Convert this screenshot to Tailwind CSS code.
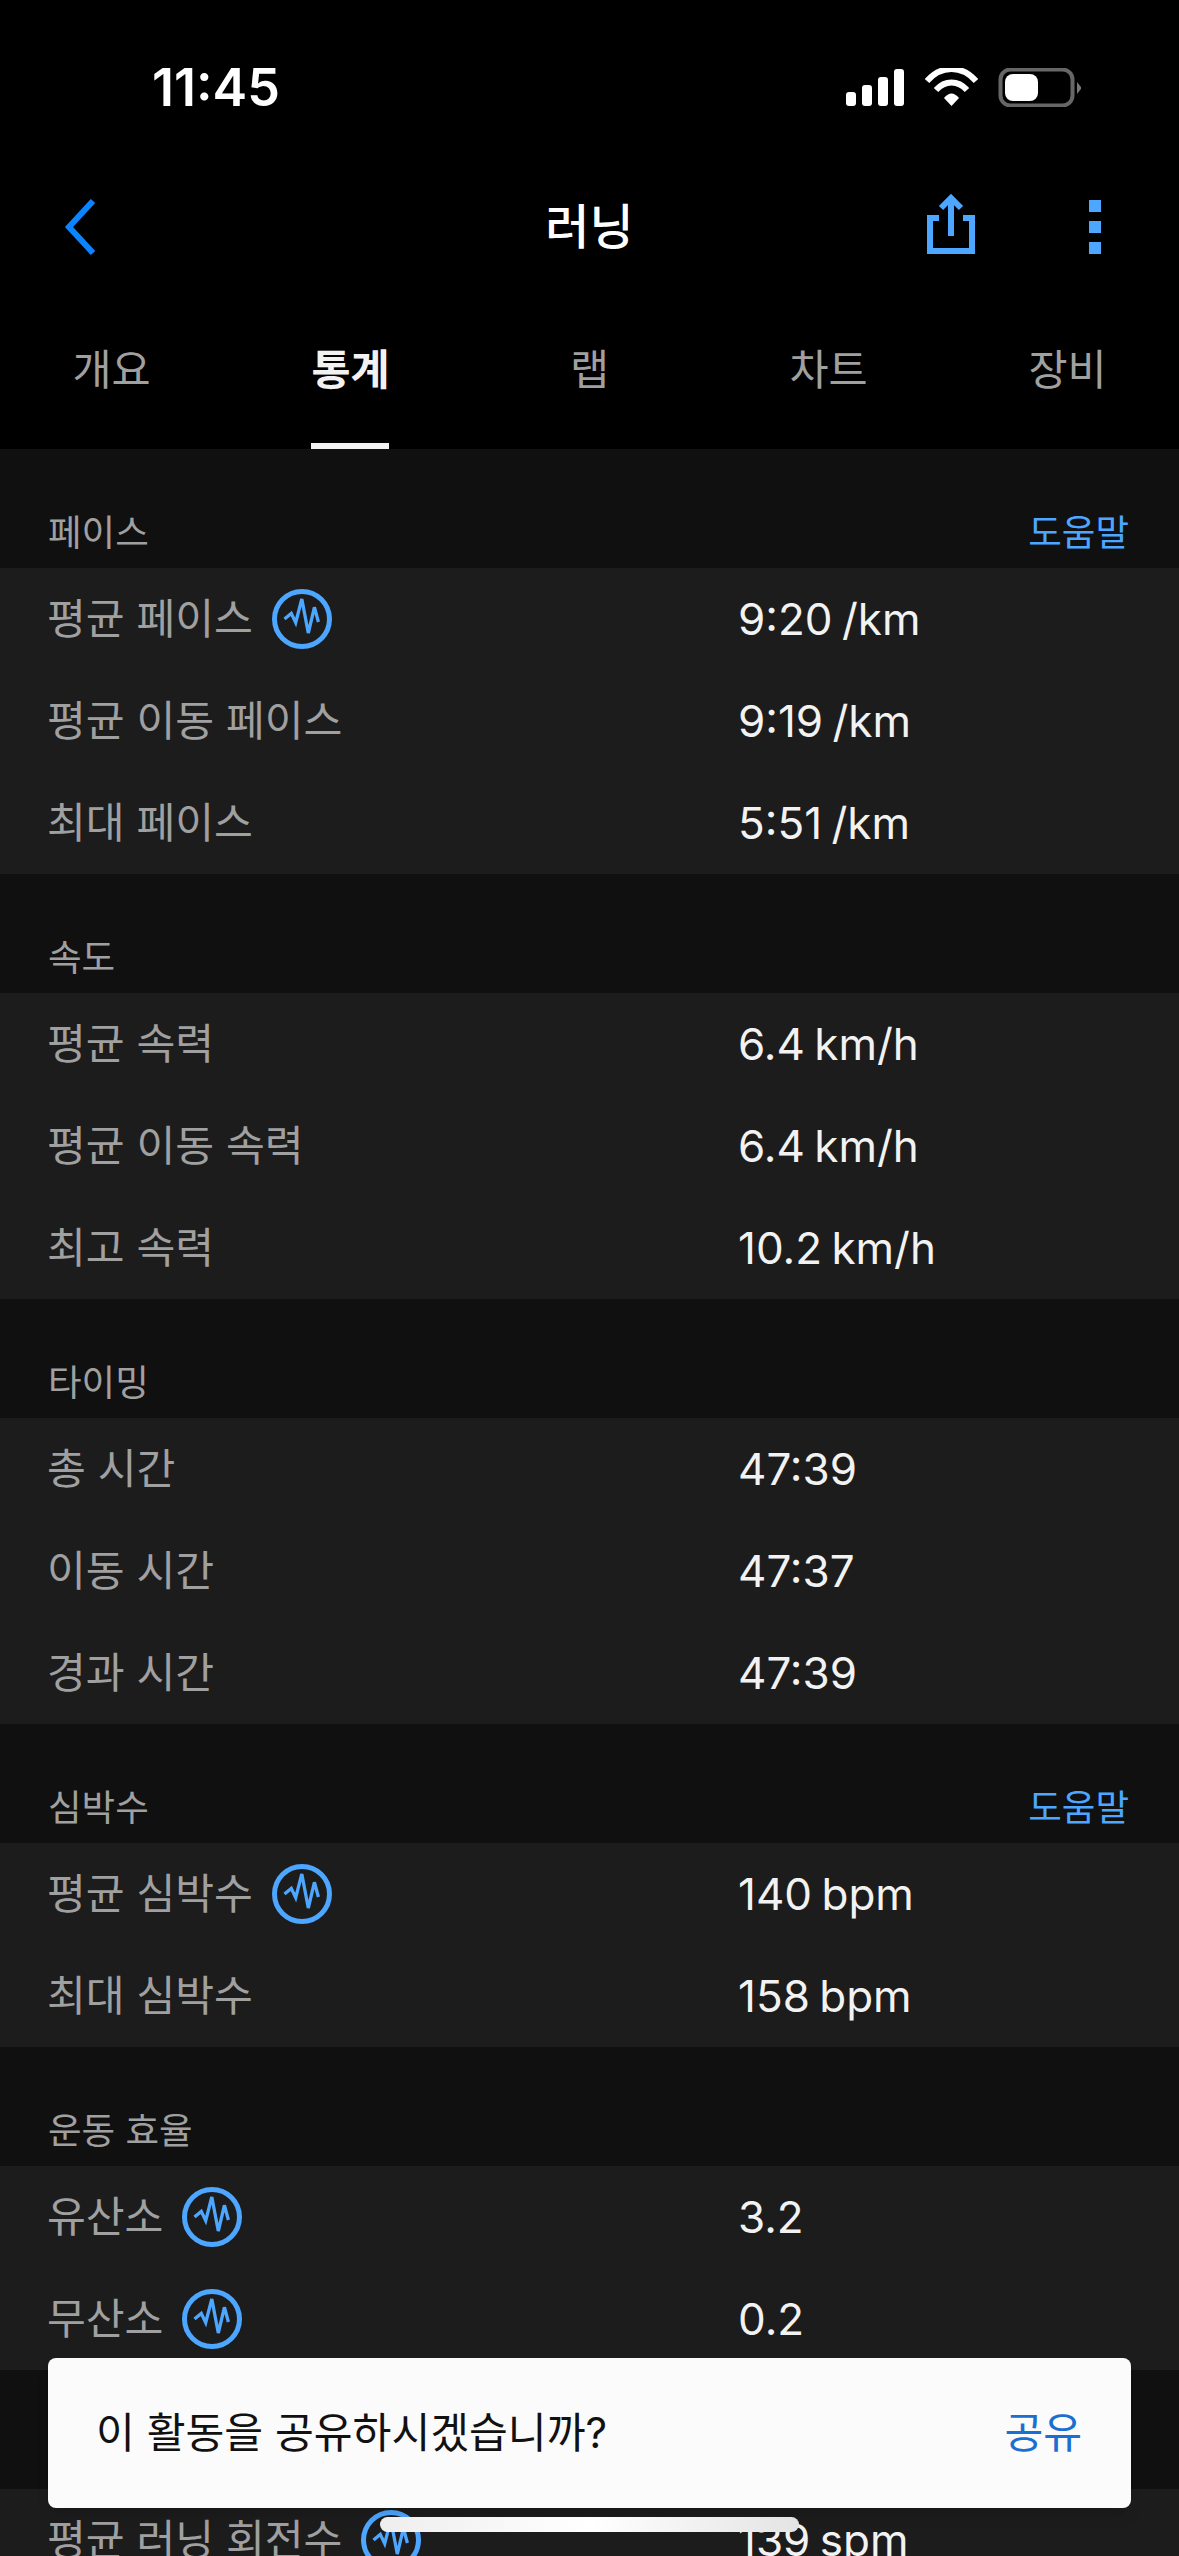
<!DOCTYPE html>
<html lang="ko">
<head>
    <meta charset="UTF-8">
    <meta name="viewport" content="width=device-width, initial-scale=1.0">
    <title>러닝 - 통계</title>
    <script src="https://cdn.jsdelivr.net/npm/@tailwindcss/browser@4"></script>
</head>
<body class="relative w-[1179px] h-[2556px] overflow-hidden bg-[#101010] font-['Inter','Noto_Sans_CJK_KR',sans-serif]">
    <svg class="hidden">
        <symbol id="pulse" viewBox="0 0 60 60">
            <circle cx="30" cy="30" r="27.5" fill="none" stroke="#4da6ff" stroke-width="5"/>
            <polyline points="12.5,30 19.3,24.4 23.7,33.6 29.8,10 36.3,44 42.4,18.3 46.4,33" fill="none" stroke="#4da6ff" stroke-width="3.3" stroke-linejoin="miter"/>
        </symbol>
    </svg>

    <!-- Top bar -->
    <header class="bg-black h-[449px]">
        <div class="h-[129px] pt-[58px] pl-[152px] pr-[98px] flex justify-between items-start">
            <span class="text-[52px] leading-[60px] font-semibold text-white">11:45</span>
            <svg class="mt-[10px]" width="235" height="39" viewBox="846 68 235 39">
                <rect x="846" y="92" width="10" height="14" rx="3" fill="#fff"/>
                <rect x="862" y="85" width="10" height="21" rx="3" fill="#fff"/>
                <rect x="878" y="77" width="10" height="29" rx="3" fill="#fff"/>
                <rect x="894" y="69" width="10" height="37" rx="3" fill="#fff"/>
                <path d="M927 81 C941 65 962 65 976 81" fill="none" stroke="#fff" stroke-width="6"/>
                <path d="M936 90 C945 80 958 80 967 90" fill="none" stroke="#fff" stroke-width="6"/>
                <path d="M944 98 C949 92 954 92 959 98 L951.500 106 Z" fill="#fff"/>
                <rect x="1000.500" y="69.500" width="72" height="36" rx="10" fill="none" stroke="#666" stroke-width="4"/>
                <rect x="1005" y="74" width="33" height="27" rx="8" fill="#fff"/>
                <path d="M1077 82 L1081 87 L1081 89 L1077 94 Z" fill="#777"/>
            </svg>
        </div>
        <nav class="relative h-[196px] flex items-center justify-center">
            <svg class="absolute left-[64px] top-[70px]" width="32" height="56" viewBox="0 0 32 56">
                <path d="M29 2 L5 28 L29 54" fill="none" stroke="#0a84ff" stroke-width="6"/>
            </svg>
            <h1 class="text-[48px] font-medium text-white">러닝</h1>
            <svg class="absolute left-[927px] top-[65px]" width="48" height="60" viewBox="927 194 48 60">
                <path d="M939 218 H930 V251 H972 V218 H963" fill="none" stroke="#4da6ff" stroke-width="6"/>
                <path d="M951 236 V200" fill="none" stroke="#4da6ff" stroke-width="6"/>
                <path d="M941 208 L951 198 L961 208" fill="none" stroke="#4da6ff" stroke-width="6"/>
            </svg>
            <div class="absolute left-[1089px] top-[71px] flex flex-col gap-[9px]">
                <div class="w-[12px] h-[12px] bg-[#4da6ff]"></div>
                <div class="w-[12px] h-[12px] bg-[#4da6ff]"></div>
                <div class="w-[12px] h-[12px] bg-[#4da6ff]"></div>
            </div>
        </nav>
        <div class="-ml-2 w-[1195px] h-[124px] grid grid-cols-5 text-[42.5px] leading-[60px] text-center text-[#a0a0a0]">
            <div class="pt-[15px]">개요</div>
            <div class="relative pt-[15px] font-semibold text-[#f2f2f2]">통계<div class="absolute left-[80px] bottom-0 w-[78px] h-[6px] bg-[#f2f2f2]"></div></div>
            <div class="pt-[15px]">랩</div>
            <div class="pt-[15px]">차트</div>
            <div class="pt-[15px]">장비</div>
        </div>
    </header>

    <!-- 페이스 -->
    <div class="h-[119px] px-[48px] pb-[13px] flex items-end justify-between text-[36.5px] leading-[44px] text-[#a0a0a0]">
        <span>페이스</span><span class="pr-[2px] text-[#4da6ff]">도움말</span>
    </div>
    <div class="bg-[#1c1c1c]">
        <div class="h-[102px] pl-[47px] grid grid-cols-[691px_1fr] items-center">
            <div class="flex items-center gap-[19px] text-[42.2px] text-[#a0a0a0]">평균 페이스<svg width="60" height="60"><use href="#pulse"/></svg></div>
            <div class="text-[44px] [word-spacing:-3px] text-[#f2f2f2]">9:20 /km</div>
        </div>
        <div class="h-[102px] pl-[47px] grid grid-cols-[691px_1fr] items-center">
            <div class="text-[42.2px] text-[#a0a0a0]">평균 이동 페이스</div>
            <div class="text-[44px] [word-spacing:-3px] text-[#f2f2f2]">9:19 /km</div>
        </div>
        <div class="h-[102px] pl-[47px] grid grid-cols-[691px_1fr] items-center">
            <div class="text-[42.2px] text-[#a0a0a0]">최대 페이스</div>
            <div class="text-[44px] [word-spacing:-3px] text-[#f2f2f2]">5:51 /km</div>
        </div>
    </div>

    <!-- 속도 -->
    <div class="h-[119px] px-[48px] pb-[13px] flex items-end text-[36.5px] leading-[44px] text-[#a0a0a0]">속도</div>
    <div class="bg-[#1c1c1c]">
        <div class="h-[102px] pl-[47px] grid grid-cols-[691px_1fr] items-center">
            <div class="text-[42.2px] text-[#a0a0a0]">평균 속력</div>
            <div class="text-[44px] [word-spacing:-3px] text-[#f2f2f2]">6.4 km/h</div>
        </div>
        <div class="h-[102px] pl-[47px] grid grid-cols-[691px_1fr] items-center">
            <div class="text-[42.2px] text-[#a0a0a0]">평균 이동 속력</div>
            <div class="text-[44px] [word-spacing:-3px] text-[#f2f2f2]">6.4 km/h</div>
        </div>
        <div class="h-[102px] pl-[47px] grid grid-cols-[691px_1fr] items-center">
            <div class="text-[42.2px] text-[#a0a0a0]">최고 속력</div>
            <div class="text-[44px] [word-spacing:-3px] text-[#f2f2f2]">10.2 km/h</div>
        </div>
    </div>

    <!-- 타이밍 -->
    <div class="h-[119px] px-[48px] pb-[13px] flex items-end text-[36.5px] leading-[44px] text-[#a0a0a0]">타이밍</div>
    <div class="bg-[#1c1c1c]">
        <div class="h-[102px] pl-[47px] grid grid-cols-[691px_1fr] items-center">
            <div class="text-[42.2px] text-[#a0a0a0]">총 시간</div>
            <div class="text-[44px] text-[#f2f2f2]">47:39</div>
        </div>
        <div class="h-[102px] pl-[47px] grid grid-cols-[691px_1fr] items-center">
            <div class="text-[42.2px] text-[#a0a0a0]">이동 시간</div>
            <div class="text-[44px] text-[#f2f2f2]">47:37</div>
        </div>
        <div class="h-[102px] pl-[47px] grid grid-cols-[691px_1fr] items-center">
            <div class="text-[42.2px] text-[#a0a0a0]">경과 시간</div>
            <div class="text-[44px] text-[#f2f2f2]">47:39</div>
        </div>
    </div>

    <!-- 심박수 -->
    <div class="h-[119px] px-[48px] pb-[13px] flex items-end justify-between text-[36.5px] leading-[44px] text-[#a0a0a0]">
        <span>심박수</span><span class="pr-[2px] text-[#4da6ff]">도움말</span>
    </div>
    <div class="bg-[#1c1c1c]">
        <div class="h-[102px] pl-[47px] grid grid-cols-[691px_1fr] items-center">
            <div class="flex items-center gap-[19px] text-[42.2px] text-[#a0a0a0]">평균 심박수<svg width="60" height="60"><use href="#pulse"/></svg></div>
            <div class="text-[44px] [word-spacing:-3px] text-[#f2f2f2]">140 bpm</div>
        </div>
        <div class="h-[102px] pl-[47px] grid grid-cols-[691px_1fr] items-center">
            <div class="text-[42.2px] text-[#a0a0a0]">최대 심박수</div>
            <div class="text-[44px] [word-spacing:-3px] text-[#f2f2f2]">158 bpm</div>
        </div>
    </div>

    <!-- 운동 효율 -->
    <div class="h-[119px] px-[48px] pb-[13px] flex items-end text-[36.5px] leading-[44px] text-[#a0a0a0]">운동 효율</div>
    <div class="bg-[#1c1c1c]">
        <div class="h-[102px] pl-[47px] grid grid-cols-[691px_1fr] items-center">
            <div class="flex items-center gap-[19px] text-[42.2px] text-[#a0a0a0]">유산소<svg width="60" height="60"><use href="#pulse"/></svg></div>
            <div class="text-[44px] text-[#f2f2f2]">3.2</div>
        </div>
        <div class="h-[102px] pl-[47px] grid grid-cols-[691px_1fr] items-center">
            <div class="flex items-center gap-[19px] text-[42.2px] text-[#a0a0a0]">무산소<svg width="60" height="60"><use href="#pulse"/></svg></div>
            <div class="text-[44px] text-[#f2f2f2]">0.2</div>
        </div>
    </div>

    <!-- section whose heading sits behind the toast -->
    <div class="h-[119px]"></div>
    <div class="bg-[#1c1c1c]">
        <div class="h-[102px] pl-[47px] grid grid-cols-[691px_1fr] items-center">
            <div class="flex items-center gap-[19px] text-[42.2px] text-[#a0a0a0]">평균 러닝 회전수<svg width="60" height="60"><use href="#pulse"/></svg></div>
            <div class="text-[44px] [word-spacing:-3px] text-[#f2f2f2]">139 spm</div>
        </div>
    </div>

    <!-- Share toast -->
    <div class="absolute left-[48px] top-[2358px] w-[1083px] h-[150px] pl-[48px] pr-[49px] flex items-center justify-between rounded-[8px] bg-[#fbfbfb] shadow-lg text-[42.2px]">
        <span class="text-[#111111]">이 활동을 공유하시겠습니까?</span>
        <span class="text-[#1a6fd0]">공유</span>
    </div>

    <!-- Home indicator -->
    <div class="absolute left-[380px] top-[2517px] w-[419px] h-[15px] rounded-full bg-linear-to-r from-[#eeeeee] via-white to-[#e4e4e4]"></div>
</body>
</html>
